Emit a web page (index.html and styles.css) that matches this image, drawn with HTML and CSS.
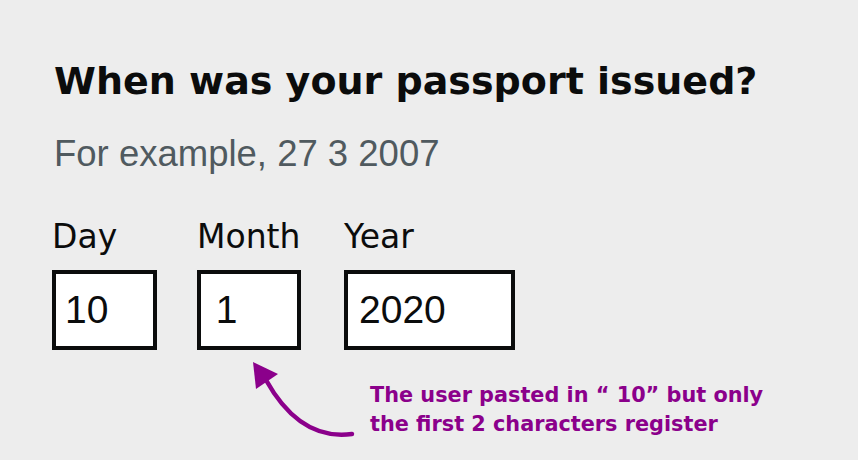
FILE: index.html
```html
<!DOCTYPE html>
<html lang="en">
<head>
    <meta charset="UTF-8">
    <meta name="viewport" content="width=device-width, initial-scale=1.0">
    <title>When was your passport issued?</title>
    <link rel="stylesheet" href="styles.css">
</head>
<body>

<div class="page">
    <h1 class="heading">When was your passport issued?</h1>
    <div class="hint">For example, 27 3 2007</div>

    <div class="date-input">
        <div class="date-item">
            <label class="date-label" for="day">Day</label>
            <input class="date-field date-field-day" id="day" type="text" value="10">
        </div>
        <div class="date-item">
            <label class="date-label" for="month">Month</label>
            <input class="date-field date-field-month" id="month" type="text" value=" 1">
        </div>
        <div class="date-item date-item-year">
            <label class="date-label" for="year">Year</label>
            <input class="date-field date-field-year" id="year" type="text" value="2020">
        </div>
    </div>

    <div class="note">The user pasted in &ldquo; 10&rdquo; but only<br>the first 2 characters register</div>

    <svg class="arrow" viewBox="0 0 858 460" width="858" height="460">
        <path d="M352 434 Q300 441 266 380" fill="none" stroke="#8b008b" stroke-width="4.5" stroke-linecap="round"/>
        <polygon points="253,362 278,374 256,389" fill="#8b008b"/>
    </svg>
</div>

</body>
</html>
```

FILE: styles.css
```css
body {
    margin: 0;
    background-color: #ededed;
    color: #0b0c0c;
}
.page {
    position: relative;
    width: 858px;
    height: 460px;
    padding-left: 52px;
    box-sizing: border-box;
    overflow: hidden;
}
.heading {
    margin: 59px 0 0 2px;
    font-family: "DejaVu Sans", sans-serif;
    font-weight: bold;
    font-size: 38px;
    line-height: 45px;
}
.hint {
    margin: 30px 0 0 2px;
    font-family: "Liberation Sans", Arial, sans-serif;
    font-size: 36.5px;
    line-height: 40px;
    color: #505a5f;
}
.date-input {
    display: flex;
    gap: 40px;
    margin-top: 44px;
}
.date-item {
    display: flex;
    flex-direction: column;
}
.date-item-year {
    margin-left: 3px;
}
.date-label {
    font-family: "DejaVu Sans", sans-serif;
    font-size: 33px;
    line-height: 38px;
    margin: 0 0 14px 0;
}
.date-field {
    height: 80px;
    box-sizing: border-box;
    border: 4px solid #0b0c0c;
    border-radius: 0;
    background: #fff;
    padding: 0 6px;
    margin: 0;
    font-family: "Liberation Sans", Arial, sans-serif;
    font-size: 39px;
    color: #0b0c0c;
    outline: none;
}
.date-field-day {
    width: 105px;
    padding-left: 9px;
}
.date-field-month {
    width: 104px;
    padding-left: 4px;
}
.date-field-year {
    width: 171px;
    padding-left: 11px;
}
.note {
    margin: 31px 0 0 318px;
    font-family: "DejaVu Sans", sans-serif;
    font-weight: bold;
    font-size: 20.8px;
    line-height: 29px;
    color: #8b008b;
    white-space: nowrap;
}
.arrow {
    position: absolute;
    top: 0;
    left: 0;
    pointer-events: none;
}
```
